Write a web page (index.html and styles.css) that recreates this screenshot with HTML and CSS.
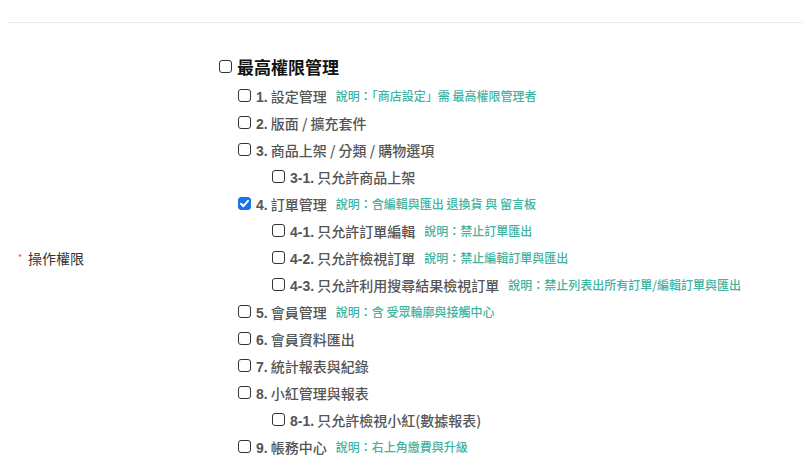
FILE: index.html
```html
<!DOCTYPE html>
<html lang="zh-Hant">
<head>
<meta charset="utf-8">
<link rel="stylesheet" href="styles.css">
</head>
<body>
<div class="divider"></div>
<div class="form-row">
  <div class="label"><span class="req">*</span>操作權限</div>
  <div class="tree">
    <div class="row root"><span class="cb"></span><span class="t">最高權限管理</span></div>
    <div class="row l1"><span class="cb"></span><span class="t"><b>1.</b> 設定管理</span><span class="note">說明：「商店設定」需 最高權限管理者</span></div>
    <div class="row l1"><span class="cb"></span><span class="t"><b>2.</b> 版面 / 擴充套件</span></div>
    <div class="row l1"><span class="cb"></span><span class="t"><b>3.</b> 商品上架 / 分類 / 購物選項</span></div>
    <div class="row l2"><span class="cb"></span><span class="t"><b>3-1.</b> 只允許商品上架</span></div>
    <div class="row l1"><span class="cb checked"><svg viewBox="0 0 13 13" width="13" height="13"><path d="M3 6.8 L5.4 9.2 L10 3.8" fill="none" stroke="#fff" stroke-width="2" stroke-linecap="round" stroke-linejoin="round"/></svg></span><span class="t"><b>4.</b> 訂單管理</span><span class="note">說明：含編輯與匯出 退換貨 與 留言板</span></div>
    <div class="row l2"><span class="cb"></span><span class="t"><b>4-1.</b> 只允許訂單編輯</span><span class="note">說明：禁止訂單匯出</span></div>
    <div class="row l2"><span class="cb"></span><span class="t"><b>4-2.</b> 只允許檢視訂單</span><span class="note">說明：禁止編輯訂單與匯出</span></div>
    <div class="row l2"><span class="cb"></span><span class="t"><b>4-3.</b> 只允許利用搜尋結果檢視訂單</span><span class="note">說明：禁止列表出所有訂單/編輯訂單與匯出</span></div>
    <div class="row l1"><span class="cb"></span><span class="t"><b>5.</b> 會員管理</span><span class="note">說明：含 受眾輪廓與接觸中心</span></div>
    <div class="row l1"><span class="cb"></span><span class="t"><b>6.</b> 會員資料匯出</span></div>
    <div class="row l1"><span class="cb"></span><span class="t"><b>7.</b> 統計報表與紀錄</span></div>
    <div class="row l1"><span class="cb"></span><span class="t"><b>8.</b> 小紅管理與報表</span></div>
    <div class="row l2"><span class="cb"></span><span class="t"><b>8-1.</b> 只允許檢視小紅(數據報表)</span></div>
    <div class="row l1"><span class="cb"></span><span class="t"><b>9.</b> 帳務中心</span><span class="note">說明：右上角繳費與升級</span></div>
  </div>
</div>
</body>
</html>
```
FILE: styles.css
```css
html, body {
  margin: 0;
  padding: 0;
  background: #fff;
  font-family: "Noto Sans CJK TC", "Noto Sans", sans-serif;
}
.divider {
  margin: 22px 0 0 8px;
  border-top: 1px solid #ececec;
}
.form-row {
  display: flex;
  align-items: center;
}
.label {
  width: 219px;
  padding-left: 18px;
  box-sizing: border-box;
  font-size: 14px;
  color: #333;
  display: flex;
  align-items: center;
}
.req {
  color: #f04a5a;
  font-size: 9px;
  width: 10px;
  margin-top: -2px;
}
.tree {
  padding-top: 28px;
  padding-bottom: 33px;
}
.row {
  display: flex;
  align-items: center;
  height: 27px;
  font-size: 14px;
  font-weight: 500;
  color: #555;
  white-space: nowrap;
}
.row b {
  font-weight: 700;
  font-family: "Liberation Sans", "Noto Sans CJK TC", sans-serif;
}
.row.root {
  height: 31px;
  font-size: 17px;
  font-weight: 700;
  color: #111;
}
.row.l1 { padding-left: 19px; }
.row.l2 { padding-left: 53px; }
.cb {
  width: 13px;
  height: 13px;
  box-sizing: border-box;
  border: 1px solid #333;
  border-radius: 3px;
  margin-right: 5px;
  flex: none;
  display: inline-flex;
}
.cb.checked {
  background: #1a73e8;
  border-color: #1a73e8;
}
.cb.checked svg { display: block; margin: -1px; }
.note {
  margin-left: 9px;
  font-size: 12px;
  font-weight: 500;
  color: #3fb3a1;
}
```
